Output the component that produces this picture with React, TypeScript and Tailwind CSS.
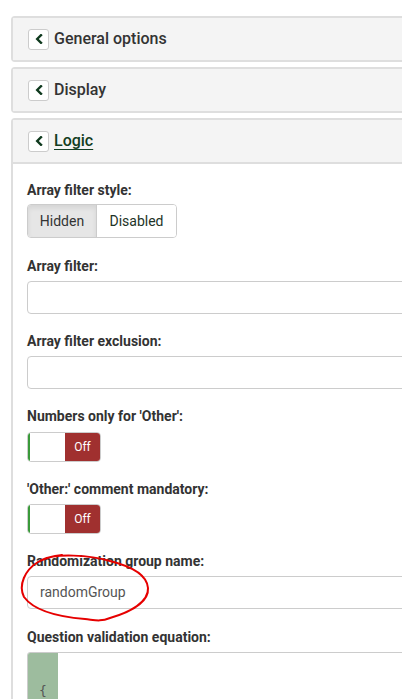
import React from "react";

const Chevron = () => (
  <svg width="8" height="10" viewBox="0 0 8 10" fill="none">
    <path d="M6 1.2 L2.2 5 L6 8.8" stroke="#0f3a1e" strokeWidth="2.4" strokeLinecap="square" />
  </svg>
);

const PanelHeader: React.FC<{ title: string; active?: boolean }> = ({ title, active }) => (
  <div className="h-[42px] bg-[#f4f4f4] flex items-center pl-[15px] gap-[5px]">
    <span className="w-[21px] h-[21px] bg-white border border-[#ccc] rounded-[3px] flex items-center justify-center">
      <Chevron />
    </span>
    <span
      className={`text-[16px] font-medium ${
        active ? "text-[#123d22] underline underline-offset-[3px]" : "text-[#333]"
      }`}
    >
      {title}
    </span>
  </div>
);

const Label: React.FC<{ children: React.ReactNode; mb?: string }> = ({ children, mb = "mb-[5px]" }) => (
  <label className={`block leading-[20px] font-bold text-[#333] ${mb}`}>{children}</label>
);

const TextInput: React.FC<{ value?: string }> = ({ value }) => (
  <div className="h-[33px] border border-[#ccc] rounded-[4px] bg-white flex items-center pl-[12px] text-[#555]">
    {value}
  </div>
);

const Switch = () => (
  <div className="w-[74px] h-[30px] border border-[#ccc] rounded-[4px] flex overflow-hidden">
    <div className="w-[37px] bg-white border-l-2 border-[#3a9a3a]" />
    <div className="flex-1 bg-[#a0302f] text-white text-[12px] flex items-center justify-center">Off</div>
  </div>
);

export default function App() {
  return (
    <div className="relative w-[402px] h-[699px] overflow-hidden bg-white font-['Roboto'] text-[14px] text-[#333] pt-[16px] pl-[11px]">
      <div className="w-[430px] flex flex-col gap-[5px]">
        <div className="border-2 border-[#dedede] rounded-[4px]">
          <PanelHeader title="General options" />
        </div>
        <div className="border-2 border-[#dedede] rounded-[4px]">
          <PanelHeader title="Display" />
        </div>
        <div className="border-2 border-[#dedede] rounded-[4px]">
          <div className="border-b-2 border-[#dedede]">
            <PanelHeader title="Logic" active />
          </div>
          <div className="bg-white pl-[14px] pt-[16px] pb-[20px]">
            <div className="mb-[18px]">
              <Label mb="mb-[4px]">Array filter style:</Label>
              <div className="inline-flex h-[34px] border border-[#ccc] rounded-[4px] overflow-hidden">
                <span className="w-[69px] bg-[#e6e6e6] shadow-[inset_0_3px_5px_rgba(0,0,0,0.08)] border-r border-[#ccc] flex items-center justify-center">
                  Hidden
                </span>
                <span className="w-[79px] bg-white flex items-center justify-center text-[#1d3327]">Disabled</span>
              </div>
            </div>
            <div className="mb-[17px]">
              <Label>Array filter:</Label>
              <TextInput />
            </div>
            <div className="mb-[17px]">
              <Label>Array filter exclusion:</Label>
              <TextInput />
            </div>
            <div className="mb-[17px]">
              <Label mb="mb-[6px]">Numbers only for 'Other':</Label>
              <Switch />
            </div>
            <div className="mb-[17px]">
              <Label mb="mb-[5px]">'Other:' comment mandatory:</Label>
              <Switch />
            </div>
            <div className="mb-[18px]">
              <Label>Randomization group name:</Label>
              <TextInput value="randomGroup" />
            </div>
            <div>
              <Label>Question validation equation:</Label>
              <div className="h-[90px] border border-[#ccc] rounded-[3px] flex overflow-hidden">
                <div className="w-[30px] bg-[#9dbc9e] flex justify-center pt-[28px] text-[#555] font-['DejaVu_Sans_Mono'] text-[13px]">
                  {"{"}
                </div>
                <div className="flex-1 bg-white" />
              </div>
            </div>
          </div>
        </div>
      </div>
      <svg className="absolute left-0 top-0 pointer-events-none" width="402" height="699" viewBox="0 0 402 699" fill="none">
        <path
          d="M42 560 C 55 553, 90 555, 110 561 C 130 566, 147 574, 148 588 C 149 602, 130 612, 110 618 C 100 622, 95 620, 85 619 C 60 617, 35 612, 24 597 C 18 585, 25 570, 38 562 C 45 558, 52 556, 62 555"
          stroke="#e60000"
          strokeWidth="2"
          strokeLinecap="round"
        />
      </svg>
    </div>
  );
}
